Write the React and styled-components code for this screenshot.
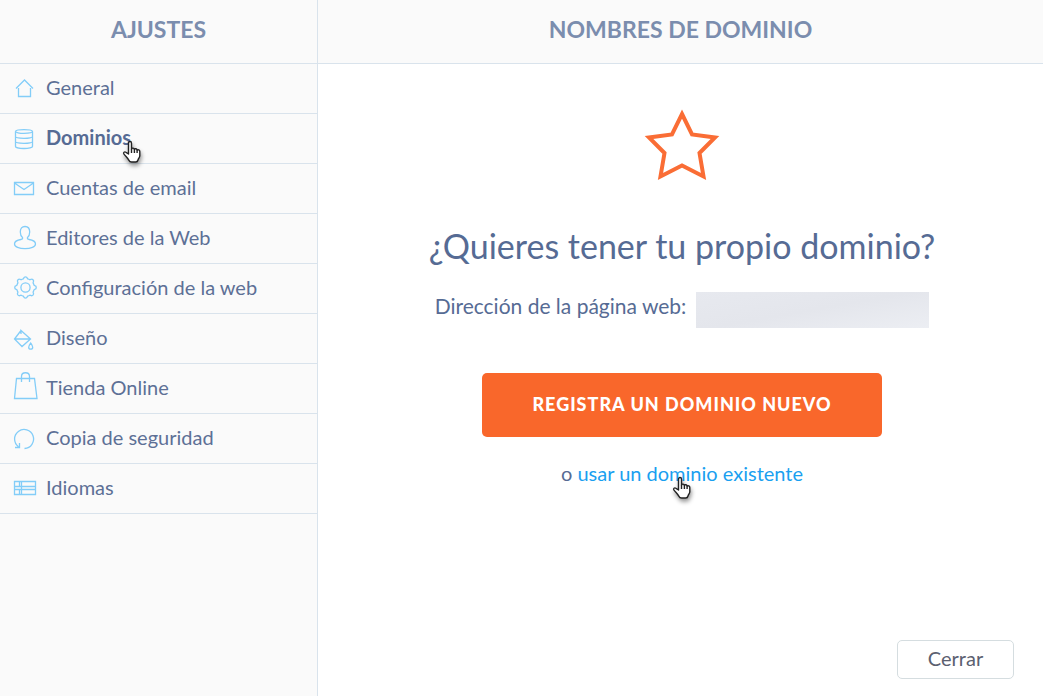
import styled, { createGlobalStyle, css } from 'styled-components';

const icons = {
  home: <path d="M4 13.5 12.5 5l8.5 8.5M6.5 13v8.5h12V13" />,
  database: (
    <>
      <ellipse cx="12" cy="6.5" rx="8.5" ry="1.8" />
      <path d="M3.5 6.5v15c0 1 3.8 2 8.5 2s8.5-1 8.5-2v-15M3.5 11.5c0 1 3.8 1.8 8.5 1.8s8.5-.8 8.5-1.8M3.5 16.5c0 1 3.8 1.8 8.5 1.8s8.5-.8 8.5-1.8" />
    </>
  ),
  mail: <path d="M2.5 7.5h19v12h-19zM2.5 8 12 14.5 21.5 8" />,
  user: (
    <path d="M10.5 12.5c-1.500-1.200-2.200-3-2.200-5.500C8.300 3.500 10 1.500 13 1.500s4.700 2 4.700 5.500c0 2.500-.7 4.300-2.200 5.500-.4 1 .2 1.600 1.500 2 4 .6 6.500 2.300 6.500 4.500 0 2.800-4.700 4.700-10.500 4.700S2.500 21.800 2.500 19c0-2.200 2.500-3.900 6.500-4.500 1.300-.4 1.900-1 1.500-2z" />
  ),
  gear: (
    <>
      <circle cx="13.5" cy="12.5" r="4.6" />
      <path d="M11.700 3.200a1.900 1.900 0 0 1 3.600 0l.4.600a7 7 0 0 1 2.200.9l.8-.2a1.900 1.900 0 0 1 2.600 2.600l-.2.800a7 7 0 0 1 .9 2.200l.8.5a1.900 1.900 0 0 1 0 3.700l-.8.500a7 7 0 0 1-.9 2.200l.2.800a1.900 1.900 0 0 1-2.600 2.600l-.8-.2a7 7 0 0 1-2.200.9l-.4.700a1.900 1.900 0 0 1-3.600 0l-.4-.700a7 7 0 0 1-2.200-.9l-.8.200a1.900 1.900 0 0 1-2.600-2.600l.2-.8a7 7 0 0 1-.9-2.200l-.8-.5a1.900 1.900 0 0 1 0-3.700l.8-.5a7 7 0 0 1 .9-2.200l-.2-.8a1.900 1.900 0 0 1 2.600-2.600l.8.2a7 7 0 0 1 2.200-.9z" />
    </>
  ),
  paint: <path d="M9 5.5 2.500 14l7.500 7.500 8.500-7.500L9 5.500V9M2.500 14h16M18.700 18c1.200 1.800 2 2.900 2 4.200a2 2 0 0 1-4 0c0-1.300.8-2.400 2-4.200z" />,
  bag: <path d="M4.500 3.500h18l2.500 20H2.500zM9.500 7V1.500c0-5 8-5 8 0V7" />,
  restore: <path d="M12.500 23.500A9.500 9.500 0 1 0 6.500 21.700M3 22.500h4.500V18" />,
  flag: <path d="M2.500 6.500h21v13h-21zM7.500 6.500v5M9.500 6.500v13M7.500 14.500v5M2.500 11.500h21M2.500 14.500h21" />,
};

const menu = [
  { label: 'General', icon: 'home' },
  { label: 'Dominios', icon: 'database', active: true },
  { label: 'Cuentas de email', icon: 'mail' },
  { label: 'Editores de la Web', icon: 'user' },
  { label: 'Configuración de la web', icon: 'gear' },
  { label: 'Diseño', icon: 'paint' },
  { label: 'Tienda Online', icon: 'bag' },
  { label: 'Copia de seguridad', icon: 'restore' },
  { label: 'Idiomas', icon: 'flag' },
];

function HandPointer() {
  return (
    <Pointer viewBox="0 0 20 24" aria-hidden="true">
      <path d="M6.500 14V3.200c0-2.200 3-2.200 3 0V9c.3-1.300 2.700-1.200 2.900.300.6-1 2.600-.7 2.700.900.8-.8 2.700-.4 2.700 1.300v4.200c0 1.700-1.300 2.600-1.800 4.300-.3 1.500-1 2-2.300 2H9.500c-1.300 0-2.100-.7-2.700-1.900C5.600 17.800 3.500 16.300 2 14.200c-1.200-1.800.6-2.900 2-1.900z" />
      <path d="M9.500 9v4M12.400 9.300V13M15.100 10.200V13" />
    </Pointer>
  );
}

function App() {
  return (
    <Page>
      <GlobalStyle />
      <Sidebar>
        <Header>
          <Title>AJUSTES</Title>
        </Header>
        <nav>
          <Menu>
            {menu.map(({ label, icon, active }) => (
              <MenuItem key={label}>
                <MenuLink href="#" $active={active}>
                  <Icon viewBox="0 0 27 27" aria-hidden="true">{icons[icon]}</Icon>
                  <Anchor $left="76px">
                    {label}
                    {active && <HandPointer />}
                  </Anchor>
                </MenuLink>
              </MenuItem>
            ))}
          </Menu>
        </nav>
      </Sidebar>
      <Main>
        <Header>
          <Title>NOMBRES DE DOMINIO</Title>
        </Header>
        <Content>
          <Star viewBox="0 0 76 72" aria-hidden="true">
            <path d="M38 5 48 25.5 71 28.5 55.5 44 59.5 67.5 38 56.5 16.5 67.5 20.5 44 5 28.5 28 25.5z" />
          </Star>
          <Question>¿Quieres tener tu propio dominio?</Question>
          <Address>
            Dirección de la página web:
            <HiddenAddress />
          </Address>
          <RegisterButton type="button">REGISTRA UN DOMINIO NUEVO</RegisterButton>
          <Existing>
            o{' '}
            <Anchor $left="95px">
              <a href="#">usar un dominio existente</a>
              <HandPointer />
            </Anchor>
          </Existing>
        </Content>
        <Footer>
          <CloseButton type="button">Cerrar</CloseButton>
        </Footer>
      </Main>
    </Page>
  );
}

const GlobalStyle = createGlobalStyle`
  * {
    box-sizing: border-box;
  }

  body {
    margin: 0;
    color: #566b94;
    background-color: white;
    font-family: Lato, 'Liberation Sans', sans-serif;
    font-size: 20px;
    line-height: 24px;
  }

  button {
    font-family: inherit;
    cursor: pointer;
  }
`;

const Page = styled.div`
  display: flex;
  min-height: 100vh;
`;

const Sidebar = styled.aside`
  flex: 0 0 318px;
  border-right: 1px solid #d9e3ec;
  background-color: #fafafa;
`;

const Main = styled.main`
  flex: 1;
  display: flex;
  flex-direction: column;
`;

const Header = styled.header`
  height: 64px;
  padding-bottom: 5px;
  border-bottom: 1px solid #d9e3ec;
  background-color: #fafafa;

  display: flex;
  align-items: center;
  justify-content: center;
`;

const Title = styled.h2`
  margin: 0;
  color: #7b8dae;
  font-size: 23px;
  font-weight: bold;
`;

const Menu = styled.ul`
  margin: 0;
  padding: 0;
  list-style: none;
`;

const MenuItem = styled.li`
  border-bottom: 1px solid #d9e3ec;
`;

const MenuLink = styled.a`
  height: 49px;
  padding: 0 12px;
  color: #5d7096;
  text-decoration: none;

  display: flex;
  align-items: center;
  gap: 7px;

  ${({ $active }) => $active && css`
    color: #566b94;
    font-weight: bold;
  `}
`;

const Icon = styled.svg`
  width: 27px;
  height: 27px;
  overflow: visible;
  fill: none;
  stroke: #83cdf8;
  stroke-width: 1.3;
`;

const Anchor = styled.span`
  position: relative;
  padding-bottom: 3px;

  & > svg {
    left: ${({ $left }) => $left};
  }
`;

const Pointer = styled.svg`
  position: absolute;
  top: 15px;
  width: 20px;
  height: 24px;
  overflow: visible;
  fill: white;
  stroke: #222;
  stroke-width: 1.4;
  stroke-linejoin: round;
  filter: drop-shadow(1px 3px 2px rgba(0, 0, 0, 0.4));
  pointer-events: none;
`;

const Content = styled.section`
  flex: 1;
  padding: 45px 0 0 3px;

  display: flex;
  flex-direction: column;
  align-items: center;
`;

const Star = styled.svg`
  width: 76px;
  height: 72px;
  fill: none;
  stroke: #fa6d35;
  stroke-width: 4;
`;

const Question = styled.h1`
  margin: 45px 0 0;
  font-size: 34px;
  font-weight: normal;
  line-height: 40px;
`;

const Address = styled.p`
  margin: 26px 0 0;
  display: flex;
  gap: 10px;
  font-size: 21px;
  line-height: 28px;
`;

const HiddenAddress = styled.span`
  width: 233px;
  height: 36px;
  background: linear-gradient(170deg, #e7e9ef, #e4e6ec 50%, #eceef3);
`;

const RegisterButton = styled.button`
  width: 400px;
  height: 64px;
  margin-top: 45px;
  padding-bottom: 3px;
  border: none;
  border-radius: 5px;
  color: white;
  background-color: #f9672b;
  font-size: 18px;
  font-weight: 900;
  letter-spacing: 1px;
`;

const Existing = styled.p`
  margin: 24px 0 0;

  a {
    color: #1a9ff0;
    text-decoration: none;
  }
`;

const Footer = styled.footer`
  padding: 0 29px 17px;
  display: flex;
  justify-content: flex-end;
`;

const CloseButton = styled.button`
  width: 117px;
  height: 39px;
  padding-bottom: 5px;
  border: 1px solid #d5dde0;
  border-radius: 5px;
  color: #5b6070;
  background-color: white;
  font-size: 20px;
`;

export default App;
